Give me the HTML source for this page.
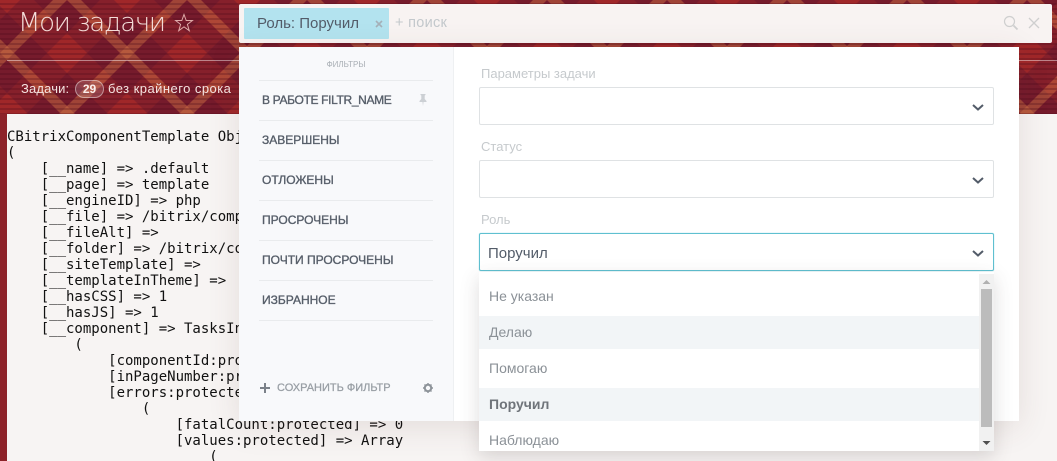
<!DOCTYPE html>
<html><head><meta charset="utf-8">
<style>
html,body{margin:0;padding:0;overflow:hidden;width:1057px;height:461px}
body{position:relative;background:#8d2229;font-family:"Liberation Sans","Noto Sans CJK SC",sans-serif}
#w{position:absolute;left:0;top:0;width:1057px;height:461px;overflow:hidden}
.a{position:absolute;white-space:nowrap}
pre{position:absolute;left:7px;top:129px;margin:0;font:14px/16px "DejaVu Sans Mono",monospace;color:#111}
.ln{position:absolute;left:259px;width:174px;height:1px;background:#e9ebed}
.it{position:absolute;left:262px;font-size:12px;color:#565e69;white-space:nowrap;line-height:16px;-webkit-text-stroke:.35px #565e69}
.lb{position:absolute;left:481px;font-size:13px;color:#c6cacd;line-height:16px}
.sel{position:absolute;left:479px;width:513px;height:36px;background:#fff;border:1px solid #dfe2e4;border-radius:2px}
.op{position:absolute;left:489px;font-size:14px;color:#8b9197;line-height:16px}
</style></head><body><div id="w">
<svg class="a" style="left:0;top:0" width="1057" height="461">
<defs>
<pattern id="p" width="120" height="120" patternUnits="userSpaceOnUse" patternTransform="matrix(.5 .5 .5 -.5 7 -7)">
<rect width="120" height="120" fill="#a02729"/>
<rect x="20" width="33" height="120" fill="#5a1430" fill-opacity=".36"/>
<rect x="67" width="33" height="120" fill="#5a1430" fill-opacity=".36"/>
<rect y="20" width="120" height="33" fill="#5a1430" fill-opacity=".36"/>
<rect y="67" width="120" height="33" fill="#5a1430" fill-opacity=".36"/>
<rect x="53" width="14" height="120" fill="#c07045" fill-opacity=".45"/>
<rect y="53" width="120" height="14" fill="#c07045" fill-opacity=".45"/>
</pattern>
<pattern id="l" width="5" height="5" patternUnits="userSpaceOnUse">
<rect y="3" width="5" height="2" fill="#4a0a18" fill-opacity=".28"/>
</pattern>
</defs>
<rect width="1057" height="114" fill="url(#p)"/>
<rect width="1057" height="114" fill="url(#l)"/>
<rect y="114" width="7" height="347" fill="#8d2229"/>
<rect x="7" y="60" width="1050" height="1" fill="#fff" fill-opacity=".45"/>
</svg>
<div class="a" style="left:7px;top:114px;width:1050px;height:347px;background:#f7f4f3"></div>
<div class="a" style="left:18px;top:6px;font-family:'DejaVu Sans ExtraLight','DejaVu Sans Light','Liberation Sans',sans-serif;font-size:26px;letter-spacing:-1.3px;line-height:34px;color:#f4dcd8">Мои задачи</div>
<svg class="a" style="left:174px;top:13px" width="20" height="20" viewBox="0 0 20 20"><path d="M10 1.500l2.200 6h6.200l-5 3.900 1.900 6.300-5.300-3.800-5.300 3.800 1.900-6.300-5-3.900h6.200z" fill="none" stroke="#e0aaa8" stroke-width="1"/></svg>
<div class="a" style="left:21px;top:81px;font-size:13px;line-height:15px;color:#f5e4e1;letter-spacing:.15px">Задачи:</div>
<div class="a" style="left:75px;top:80px;width:27px;height:16px;border:1px solid rgba(255,255,255,.45);border-radius:9px;background:rgba(255,255,255,.15);color:#fbeeec;font-size:12px;font-weight:bold;text-align:center;line-height:16px">29</div>
<div class="a" style="left:108px;top:81px;font-size:13px;line-height:15px;color:#f5e4e1;letter-spacing:.46px">без крайнего срока</div>

<pre>CBitrixComponentTemplate Object
(
    [__name] =&gt; .default
    [__page] =&gt; template
    [__engineID] =&gt; php
    [__file] =&gt; /bitrix/components/
    [__fileAlt] =&gt; 
    [__folder] =&gt; /bitrix/components
    [__siteTemplate] =&gt; 
    [__templateInTheme] =&gt; 
    [__hasCSS] =&gt; 1
    [__hasJS] =&gt; 1
    [__component] =&gt; TasksInterface
        (
            [componentId:protected]
            [inPageNumber:protected]
            [errors:protected] =&gt; Array
                (
                    [fatalCount:protected] =&gt; 0
                    [values:protected] =&gt; Array
                        (</pre>

<!-- search bar -->
<div class="a" style="left:239px;top:4px;width:813px;height:39px;background:#f8f3f2;border-radius:2px"></div>
<div class="a" style="left:244px;top:8px;width:145px;height:31px;background:#b3e3ef;border-radius:1px"></div>
<div class="a" style="left:257px;top:15px;font-size:15px;line-height:17px;color:#535c69">Роль: Поручил</div>
<svg class="a" style="left:375px;top:20px" width="8" height="8" viewBox="0 0 8 8"><path d="M1 1l6 6M7 1L1 7" stroke="#a5b0b8" stroke-width="1.600"/></svg>
<div class="a" style="left:395px;top:15px;font-size:14.5px;line-height:17px;color:#c3c8cc;letter-spacing:.3px">+ поиск</div>
<svg class="a" style="left:1003px;top:15px" width="16" height="16" viewBox="0 0 16 16"><circle cx="6.500" cy="6.500" r="5" fill="none" stroke="#cfcfcf" stroke-width="1.200"/><path d="M10.500 10.500l4 4" stroke="#cfcfcf" stroke-width="1.800"/></svg>
<svg class="a" style="left:1028px;top:17px" width="12" height="12" viewBox="0 0 12 12"><path d="M1 1l10 10M11 1L1 11" stroke="#cfcfcf" stroke-width="1.300"/></svg>

<!-- panel -->
<div class="a" style="left:239px;top:47px;width:780px;height:374px;background:#fff;box-shadow:0 6px 30px rgba(90,60,50,.12)"></div>
<div class="a" style="left:239px;top:47px;width:214px;height:374px;background:#f8f9fb;border-right:1px solid #eef0f2"></div>
<div class="a" style="left:239px;top:60px;width:214px;text-align:center;font-size:8px;line-height:10px;color:#a9afb5">ФИЛЬТРЫ</div>
<div class="ln" style="top:80px"></div><div class="ln" style="top:120px"></div><div class="ln" style="top:160px"></div><div class="ln" style="top:200px"></div><div class="ln" style="top:240px"></div><div class="ln" style="top:280px"></div><div class="ln" style="top:320px"></div>
<div class="it" style="top:92px;letter-spacing:-.35px">В РАБОТЕ FILTR_NAME</div>
<div class="it" style="top:132px">ЗАВЕРШЕНЫ</div>
<div class="it" style="top:172px">ОТЛОЖЕНЫ</div>
<div class="it" style="top:212px">ПРОСРОЧЕНЫ</div>
<div class="it" style="top:252px">ПОЧТИ ПРОСРОЧЕНЫ</div>
<div class="it" style="top:292px">ИЗБРАННОЕ</div>
<svg class="a" style="left:418px;top:94px" width="10" height="13" viewBox="0 0 10 13"><path d="M2.500 0h5v1l-.8.500v3.500l1.800 2v1h-3l-.5 4-.5-4h-3v-1l1.800-2v-3.500l-.8-.500z" fill="#ccd0d4"/></svg>
<svg class="a" style="left:260px;top:383px" width="10" height="10" viewBox="0 0 10 10"><path d="M5 0v10M0 5h10" stroke="#7b8189" stroke-width="2"/></svg>
<div class="a" style="left:277px;top:381px;font-size:11px;-webkit-text-stroke:.25px #989ea4;line-height:14px;color:#989ea4">СОХРАНИТЬ ФИЛЬТР</div>
<svg class="a" style="left:423px;top:383px" width="10" height="10" viewBox="0 0 10 10"><circle cx="5" cy="5" r="3.200" fill="none" stroke="#8d9399" stroke-width="2"/><path d="M5 0v2M5 8v2M0 5h2M8 5h2M1.500 1.500l1.200 1.200M7.300 7.300l1.200 1.200M8.500 1.500L7.300 2.700M2.700 7.300L1.500 8.500" stroke="#8d9399" stroke-width="1.400"/></svg>

<div class="lb" style="top:66px">Параметры задачи</div>
<div class="sel" style="top:87px"></div>
<svg class="a" style="left:971px;top:103px" width="14" height="9" viewBox="0 0 14 9"><path d="M2 2l5 4.500L12 2" fill="none" stroke="#535c69" stroke-width="2"/></svg>
<div class="lb" style="top:139px">Статус</div>
<div class="sel" style="top:160px"></div>
<svg class="a" style="left:971px;top:176px" width="14" height="9" viewBox="0 0 14 9"><path d="M2 2l5 4.500L12 2" fill="none" stroke="#535c69" stroke-width="2"/></svg>
<div class="lb" style="top:212px">Роль</div>
<div class="sel" style="top:233px;border-color:#5fc0d0;box-shadow:0 0 1px #8ed6e2"></div>
<div class="a" style="left:488px;top:245px;font-size:15px;line-height:18px;color:#535c69">Поручил</div>
<svg class="a" style="left:971px;top:249px" width="14" height="9" viewBox="0 0 14 9"><path d="M2 2l5 4.500L12 2" fill="none" stroke="#535c69" stroke-width="2"/></svg>

<!-- dropdown -->
<div class="a" style="left:479px;top:272px;width:515px;height:179px;background:#fff;box-shadow:0 6px 18px rgba(70,60,60,.18)"></div>
<div class="a" style="left:479px;top:316px;width:500px;height:33px;background:#f2f5f7"></div>
<div class="a" style="left:479px;top:388px;width:500px;height:33px;background:#f2f5f7"></div>
<div class="op" style="top:288px">Не указан</div>
<div class="op" style="top:324px">Делаю</div>
<div class="op" style="top:360px">Помогаю</div>
<div class="op" style="top:396px;font-weight:bold;color:#6f747a">Поручил</div>
<div class="op" style="top:432px">Наблюдаю</div>
<div class="a" style="left:979px;top:274px;width:15px;height:177px;background:#f1f1f1"></div>
<div class="a" style="left:981px;top:289px;width:11px;height:138px;background:#bcbcbc"></div>
<svg class="a" style="left:982px;top:279px" width="9" height="6"><path d="M0.500 5L4.500 1l4 4z" fill="#b0b0b0"/></svg>
<svg class="a" style="left:982px;top:440px" width="9" height="6"><path d="M0.500 1h8l-4 4z" fill="#505050"/></svg>
</div></body></html>
